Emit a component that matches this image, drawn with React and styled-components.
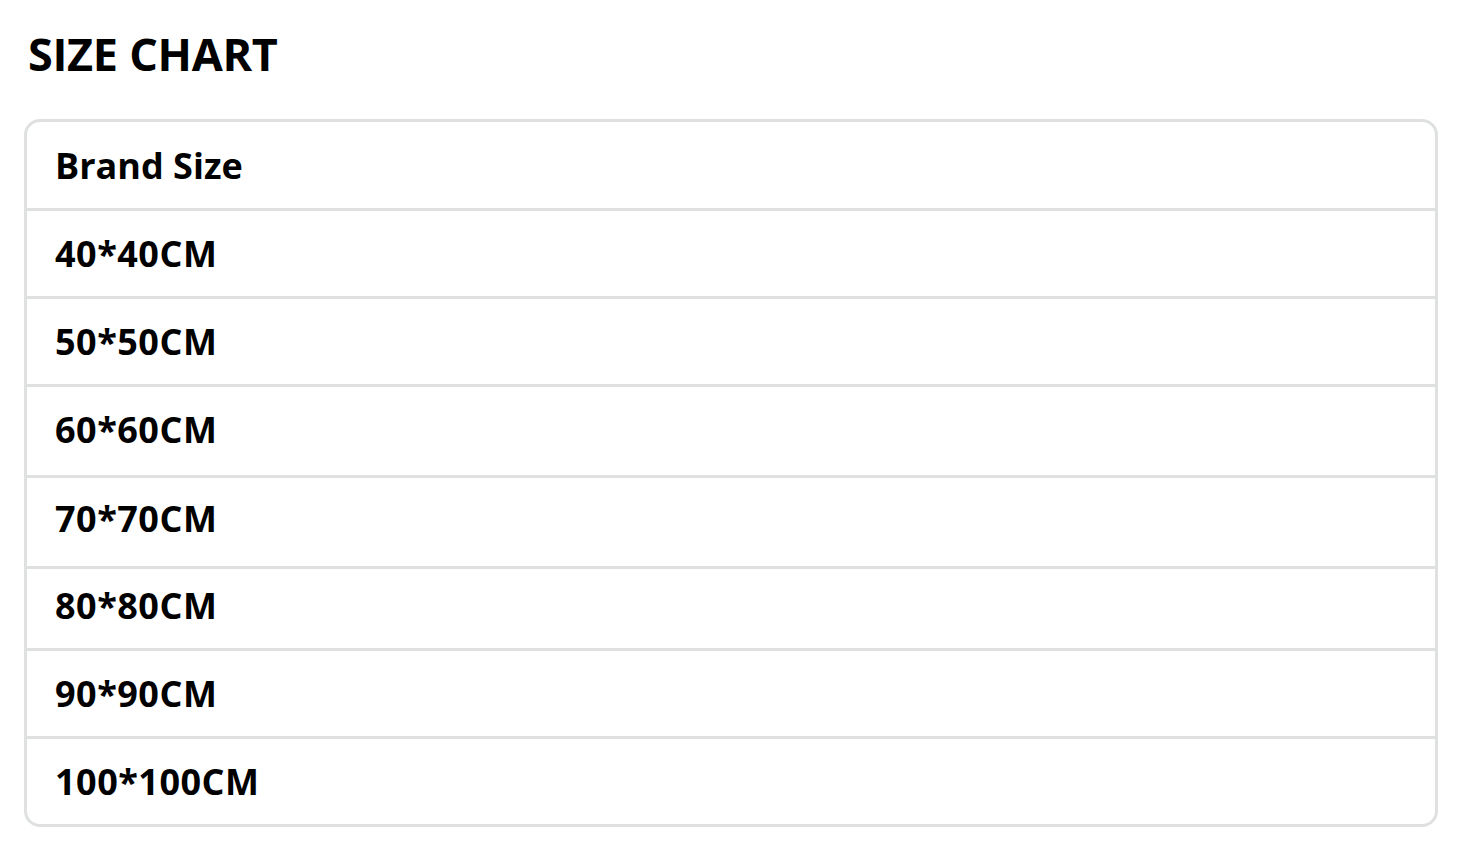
import styled, { createGlobalStyle } from "styled-components";

const Global = createGlobalStyle`
  html, body {
    margin: 0;
    padding: 0;
    background: #fff;
  }
  body {
    font-family: "Open Sans", "Noto Sans", sans-serif;
    color: #000;
  }
`;

const Page = styled.div`
  padding: 22px 26px 0 24px;
  width: 1414px;
`;

const Title = styled.h1`
  margin: 0 0 0 4px;
  font-size: 45px;
  font-weight: 700;
  line-height: 64px;
  letter-spacing: -0.3px;
`;

const Table = styled.div`
  margin-top: 33px;
  border: 3px solid #dfe1e1;
  border-radius: 16px;
  overflow: hidden;
`;

const Row = styled.div`
  display: flex;
  align-items: center;
  box-sizing: border-box;
  height: ${(p) => p.h}px;
  padding-left: 28px;
  padding-bottom: ${(p) => p.lift * 2}px;
  font-size: 36px;
  font-weight: 700;
  letter-spacing: ${(p) => (p.first ? "0" : "0.5px")};
  border-top: ${(p) => (p.first ? "none" : "3px solid #dfe1e1")};
`;

const rows = [
  ["Brand Size", 86, 0],
  ["40*40CM", 88, 0],
  ["50*50CM", 88, 0],
  ["60*60CM", 91, 2],
  ["70*70CM", 91, 4],
  ["80*80CM", 82, 3],
  ["90*90CM", 88, 0],
  ["100*100CM", 88, 0],
];

export default function App() {
  return (
    <>
      <Global />
      <Page>
        <Title>SIZE CHART</Title>
        <Table>
          {rows.map(([label, h, lift], i) => (
            <Row key={label} h={h} lift={lift} first={i === 0}>
              {label}
            </Row>
          ))}
        </Table>
      </Page>
    </>
  );
}
